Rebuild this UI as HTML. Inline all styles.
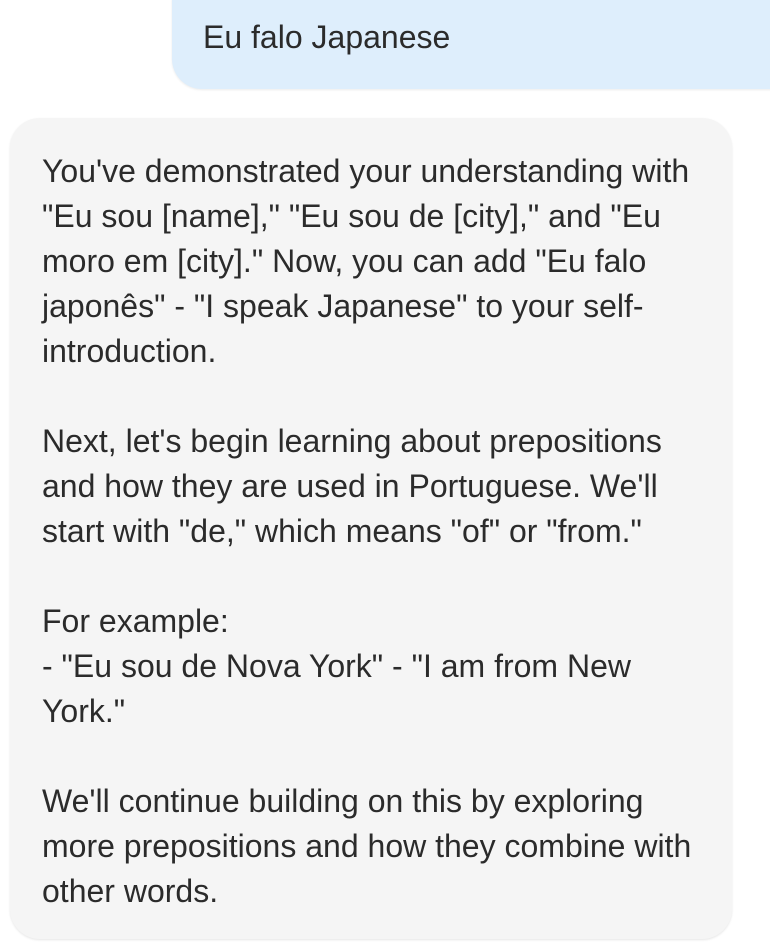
<!DOCTYPE html>
<html><head><meta charset="utf-8"><style>
html,body{margin:0;padding:0;background:#fff;width:770px;height:943px;overflow:hidden}
body{font-family:"Liberation Sans",Arial,sans-serif;color:#2b2b2b;font-size:32px;position:relative}
.u{position:absolute;left:172px;top:-30px;width:640px;height:119px;background:#deeefc;border-radius:30px;box-shadow:0 1px 2px rgba(0,0,0,.08)}
.u span{position:absolute;left:31px;top:49px;line-height:36px}
.a{position:absolute;left:10px;top:118px;width:722px;height:821px;background:#f5f5f5;border-radius:30px;box-shadow:0 1px 2px rgba(0,0,0,.1)}
.a div{position:absolute;left:32px;top:31px;line-height:45px;white-space:pre}
</style></head><body>
<div class="u"><span>Eu falo Japanese</span></div>
<div class="a"><div>You've demonstrated your understanding with
"Eu sou [name]," "Eu sou de [city]," and "Eu
moro em [city]." Now, you can add "Eu falo
japonês" - "I speak Japanese" to your self-
introduction.

Next, let's begin learning about prepositions
and how they are used in Portuguese. We'll
start with "de," which means "of" or "from."

For example:
- "Eu sou de Nova York" - "I am from New
York."

We'll continue building on this by exploring
more prepositions and how they combine with
other words.</div></div>
</body></html>
